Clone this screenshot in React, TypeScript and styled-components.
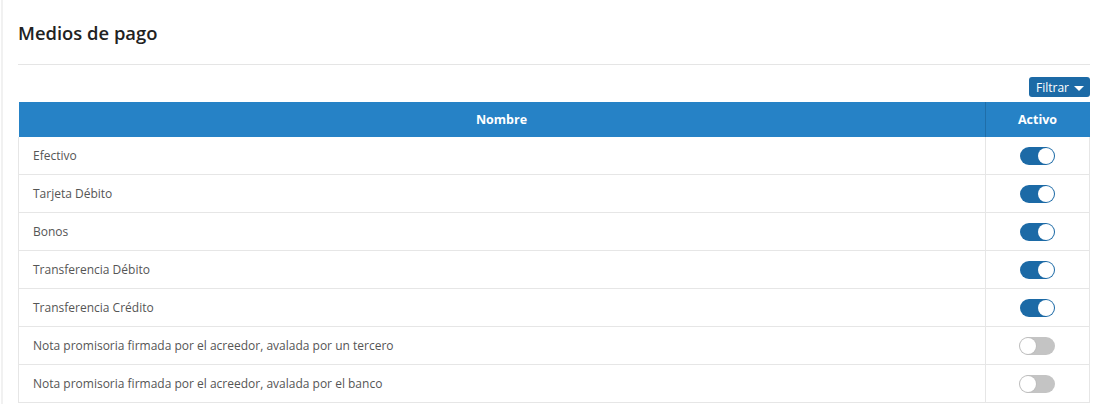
import React from "react";
import styled, { createGlobalStyle } from "styled-components";

const Global = createGlobalStyle`
  html, body { margin: 0; padding: 0; background: #fff; }
  body { font-family: "Open Sans", "Noto Sans", sans-serif; color: #555; }
`;

const Page = styled.div`
  display: flex;
  min-height: 404px;
`;

const EdgeLine = styled.div`
  width: 2px;
  background: #f1f1f1;
  margin-left: 1px;
  flex: none;
`;

const Content = styled.div`
  flex: 1;
  padding: 0 3px 0 15px;
`;

const Title = styled.h1`
  margin: 0;
  padding: 20px 0 0;
  height: 43px;
  box-sizing: border-box;
  font-size: 18.4px;
  font-weight: 600;
  color: #222;
  line-height: 26px;
`;

const Rule = styled.hr`
  border: 0;
  border-top: 1px solid #e5e5e5;
  margin: 21px 0 0;
`;

const Toolbar = styled.div`
  display: flex;
  justify-content: flex-end;
  padding: 12px 0 5px;
`;

const FilterButton = styled.button`
  display: flex;
  align-items: center;
  gap: 5px;
  height: 20px;
  padding: 0 6px 0 7px;
  border: 0;
  border-radius: 3px;
  background: #1c6aa6;
  color: #fff;
  font-family: inherit;
  font-size: 12px;
  cursor: pointer;
`;

const Caret = styled.span`
  width: 0;
  height: 0;
  border-left: 5px solid transparent;
  border-right: 5px solid transparent;
  border-top: 5px solid #fff;
  margin-top: 2px;
`;

const Table = styled.table`
  width: 100%;
  border-collapse: collapse;
  font-size: 12px;
`;

const Th = styled.th<{ $narrow?: boolean }>`
  background: #2682c6;
  color: #fff;
  font-weight: 700;
  font-size: 12.5px;
  height: 35px;
  padding: 0;
  text-align: center;
  width: ${(p) => (p.$narrow ? "104px" : "auto")};
  border-left: ${(p) => (p.$narrow ? "1px solid #1f6ea9" : "0")};
`;

const Tr = styled.tr`
  border-bottom: 1px solid #e6e6e6;
`;

const Td = styled.td<{ $center?: boolean }>`
  height: 37px;
  padding: 0 0 0 14px;
  color: #555;
  border-left: 1px solid #e6e6e6;
  border-right: 1px solid #e6e6e6;
  text-align: ${(p) => (p.$center ? "center" : "left")};
  ${(p) => (p.$center ? "padding: 0;" : "")}
`;

const Switch = styled.span<{ $on: boolean }>`
  display: inline-block;
  position: relative;
  width: 35px;
  height: 18px;
  border-radius: 9px;
  background: ${(p) => (p.$on ? "#1c6aa6" : "#c4c4c4")};
  vertical-align: middle;
`;

const Knob = styled.span<{ $on: boolean }>`
  position: absolute;
  top: 1px;
  left: ${(p) => (p.$on ? "18px" : "0px")};
  width: 16px;
  height: 16px;
  border-radius: 50%;
  background: #fff;
  box-shadow: ${(p) => (p.$on ? "none" : "0 0 0 1px #bdbdbd")};
`;

const rows: { name: string; on: boolean }[] = [
  { name: "Efectivo", on: true },
  { name: "Tarjeta Débito", on: true },
  { name: "Bonos", on: true },
  { name: "Transferencia Débito", on: true },
  { name: "Transferencia Crédito", on: true },
  { name: "Nota promisoria firmada por el acreedor, avalada por un tercero", on: false },
  { name: "Nota promisoria firmada por el acreedor, avalada por el banco", on: false },
];

export default function App() {
  return (
    <>
      <Global />
      <Page>
        <EdgeLine />
        <Content>
          <Title>Medios de pago</Title>
          <Rule />
          <Toolbar>
            <FilterButton>
              Filtrar <Caret />
            </FilterButton>
          </Toolbar>
          <Table>
            <thead>
              <tr>
                <Th>Nombre</Th>
                <Th $narrow>Activo</Th>
              </tr>
            </thead>
            <tbody>
              {rows.map((r) => (
                <Tr key={r.name}>
                  <Td>{r.name}</Td>
                  <Td $center>
                    <Switch $on={r.on}>
                      <Knob $on={r.on} />
                    </Switch>
                  </Td>
                </Tr>
              ))}
            </tbody>
          </Table>
        </Content>
      </Page>
    </>
  );
}
